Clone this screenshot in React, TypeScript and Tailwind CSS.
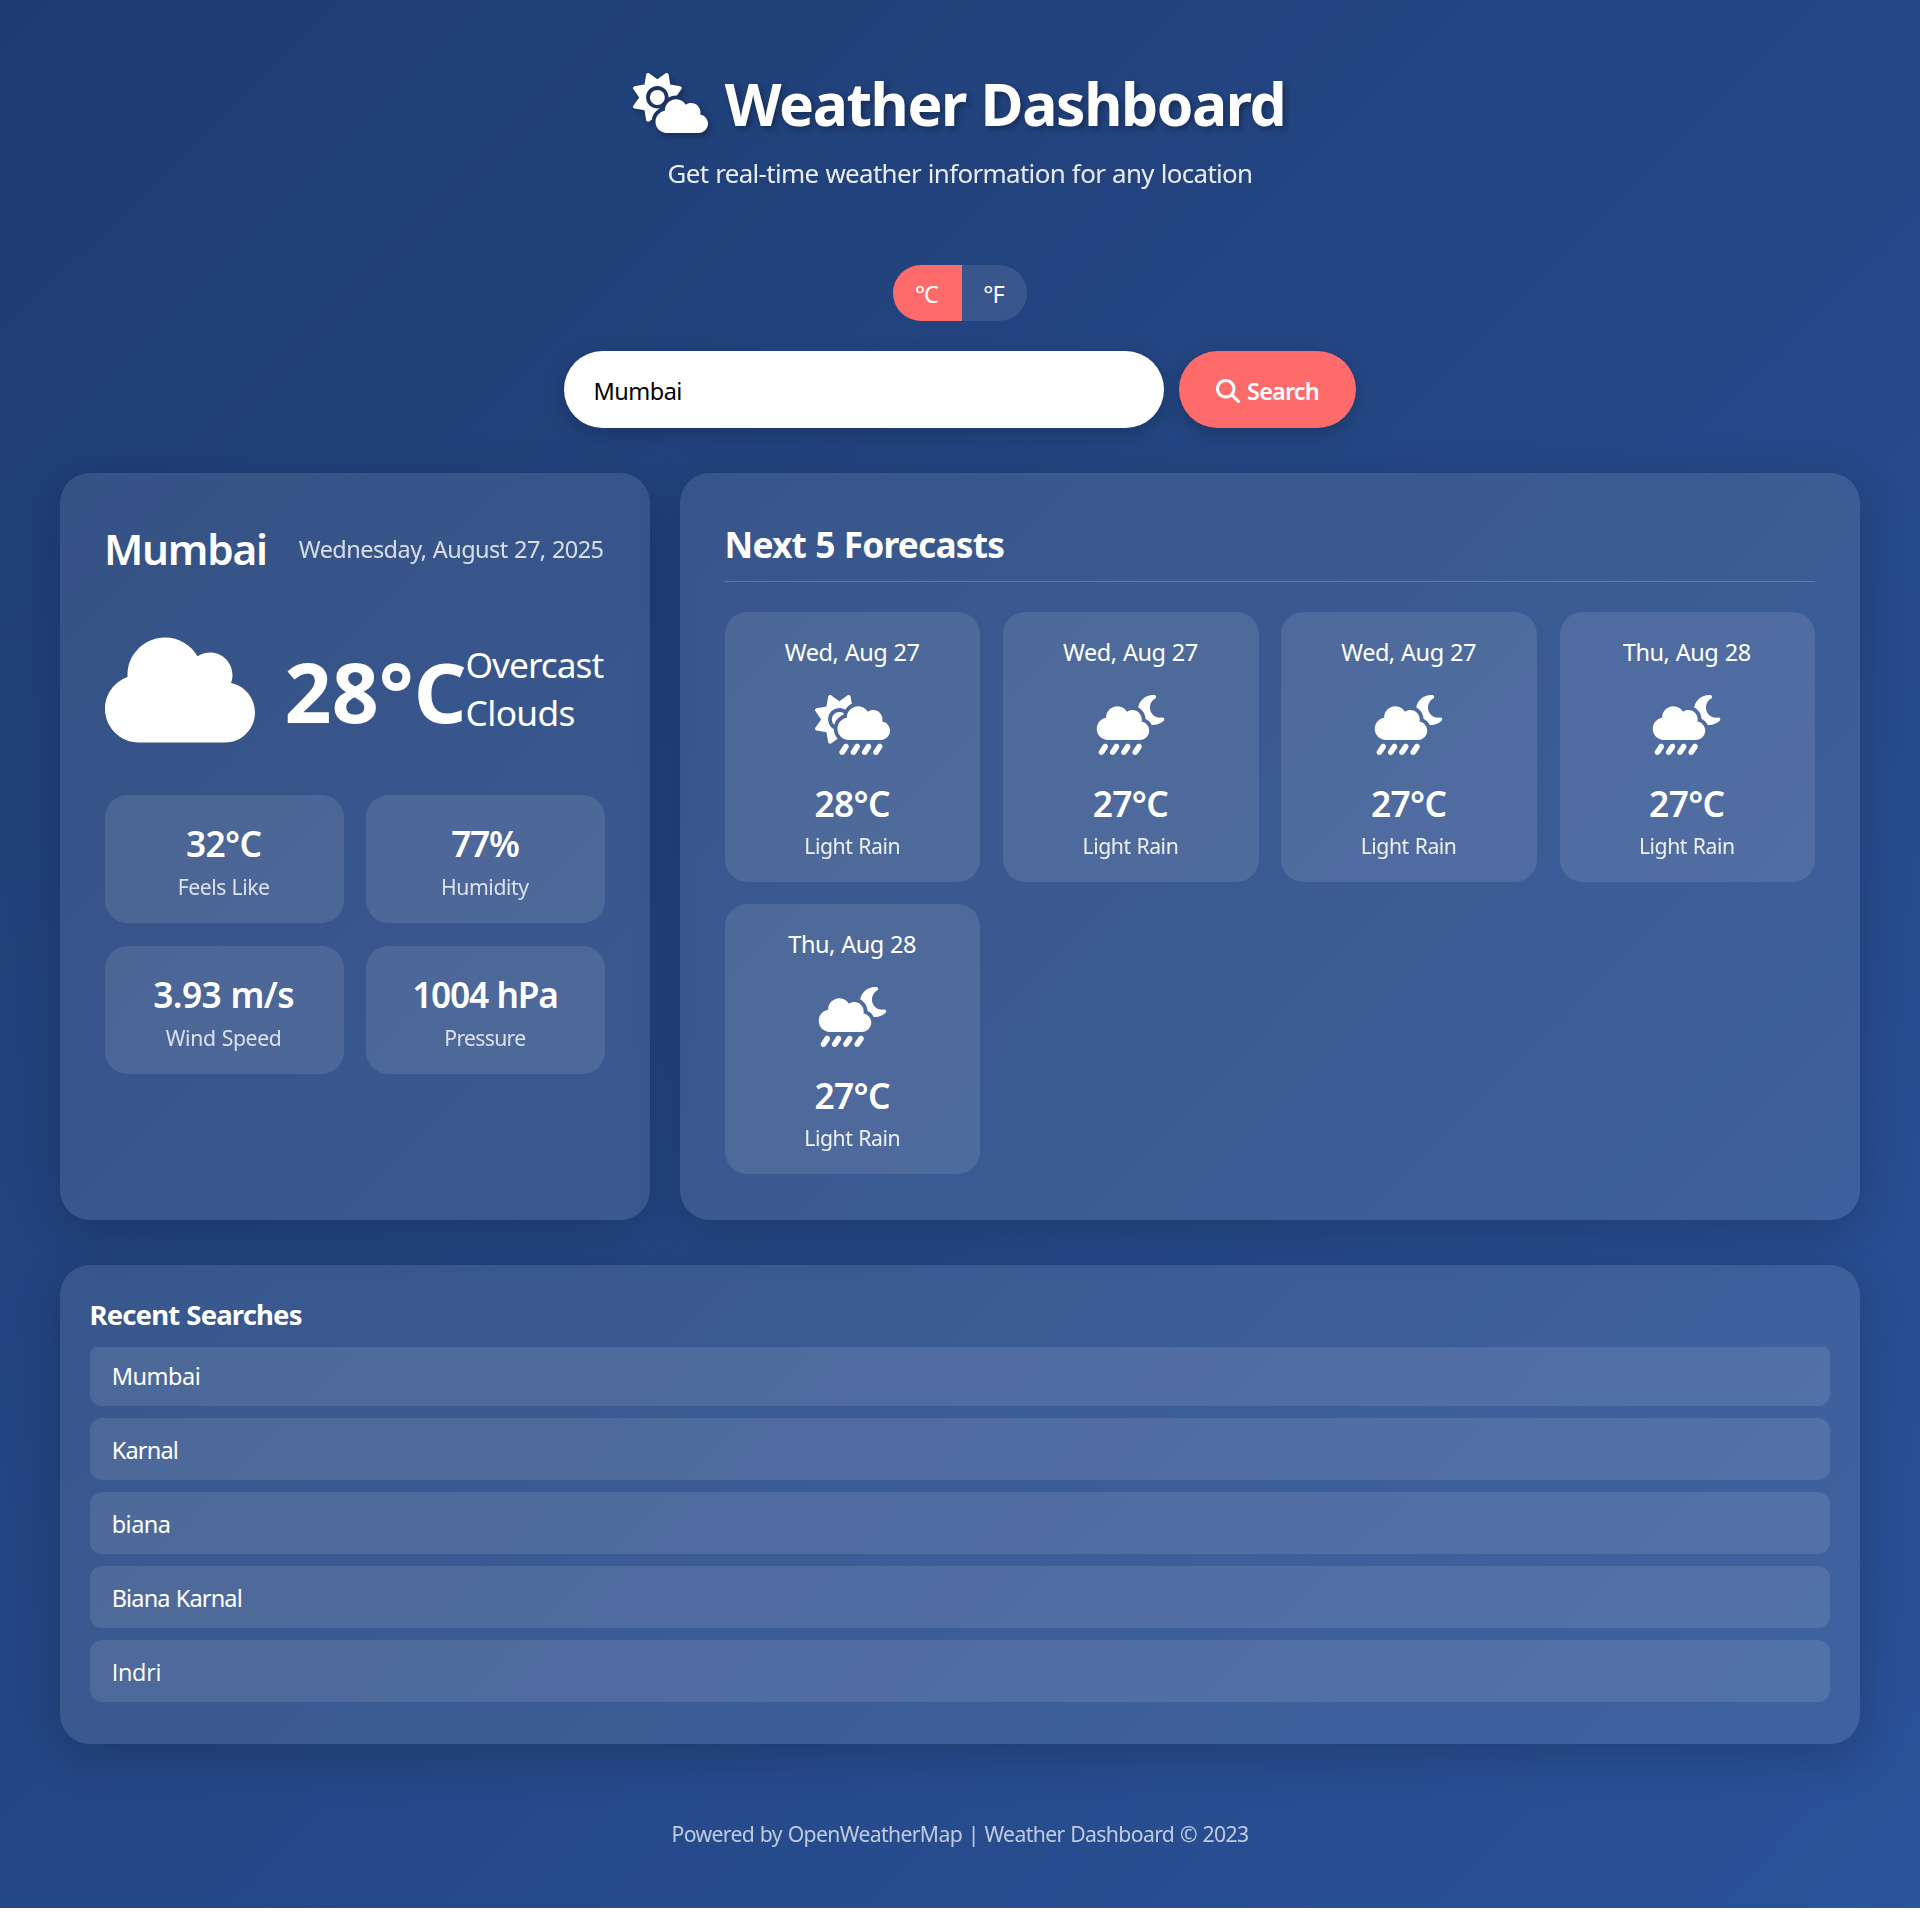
import React from "react";
import {
  FaCloud,
  FaCloudMoonRain,
  FaCloudSun,
  FaCloudSunRain,
  FaMagnifyingGlass,
} from "react-icons/fa6";

const details = [
  { value: "32°C", label: "Feels Like", valueClass: "tracking-[-0.019em]", labelClass: "tracking-[-0.024em]" },
  { value: "77%", label: "Humidity", valueClass: "tracking-[-0.036em]", labelClass: "tracking-[-0.019em]" },
  { value: "3.93 m/s", label: "Wind Speed", valueClass: "tracking-[-0.017em]", labelClass: "tracking-[-0.016em]" },
  { value: "1004 hPa", label: "Pressure", valueClass: "tracking-[-0.036em]", labelClass: "tracking-[-0.033em]" },
];

const forecasts = [
  { date: "Wed, Aug 27", temp: "28°C", night: false },
  { date: "Wed, Aug 27", temp: "27°C", night: true },
  { date: "Wed, Aug 27", temp: "27°C", night: true },
  { date: "Thu, Aug 28", temp: "27°C", night: true },
  { date: "Thu, Aug 28", temp: "27°C", night: true },
];

const recent = [
  { name: "Mumbai", className: "tracking-[-0.02em]" },
  { name: "Karnal", className: "tracking-[-0.034em]" },
  { name: "biana", className: "tracking-[-0.022em]" },
  { name: "Biana Karnal", className: "tracking-[-0.036em]" },
  { name: "Indri", className: "font-['Open_Sans',sans-serif] tracking-[-0.012em]" },
];

function Header() {
  return (
    <header className="flex flex-col items-center pt-[62px]">
      <h1 className="-ml-[2px] flex h-20 items-center gap-[17px] text-[58.8px] leading-[80px] font-bold tracking-[-0.0242em] whitespace-nowrap">
        <FaCloudSun className="mt-px h-[60px] w-[75px] drop-shadow-[3px_3px_3px_rgba(0,0,0,0.3)]" />
        <span className="mt-px [text-shadow:3px_3px_6px_rgba(0,0,0,0.3)]">Weather Dashboard</span>
      </h1>
      <p className="mt-[13px] text-[25.9px] leading-9 tracking-[-0.0252em] opacity-90">
        Get real-time weather information for any location
      </p>
    </header>
  );
}

function UnitToggle() {
  return (
    <div className="mx-auto mt-[74px] flex h-14 w-[134px] overflow-hidden rounded-full bg-white/10 text-[23.5px] leading-8 tracking-[-0.04em]">
      <button className="w-[69px] bg-[#ff6b6b] pt-px pr-[2px]">°C</button>
      <button className="w-[65px] pt-px pr-[2px]">°F</button>
    </div>
  );
}

function SearchBar() {
  return (
    <div className="mt-[30px] flex justify-center gap-[15px]">
      <input
        type="text"
        defaultValue="Mumbai"
        className="h-[77px] w-[600px] rounded-full bg-white pt-[3px] pl-[29.5px] text-[23.5px] tracking-[-0.022em] text-black shadow-[0_6px_20px_rgba(0,0,0,0.2)] outline-none"
      />
      <button className="flex h-[77px] w-[177px] items-center justify-center gap-[7px] rounded-full bg-[#ff6b6b] text-[23.5px] leading-8 font-semibold tracking-[-0.036em] shadow-[0_6px_20px_rgba(0,0,0,0.2)]">
        <FaMagnifyingGlass className="mt-[2px] h-6 w-6" />
        <span className="pt-[3px]">Search</span>
      </button>
    </div>
  );
}

function CurrentWeather() {
  return (
    <section className="rounded-[30px] bg-white/10 px-[45px] pt-[46px] shadow-[0_12px_48px_rgba(0,0,0,0.2)]">
      <div className="flex h-[58px] items-center justify-between whitespace-nowrap">
        <h2 className="-ml-px pt-[2px] text-[42.3px] leading-[58px] font-semibold tracking-[-0.029em]">Mumbai</h2>
        <span className="mr-[1.5px] pt-px text-[23.5px] leading-8 tracking-[-0.0235em] opacity-80">
          Wednesday, August 27, 2025
        </span>
      </div>
      <div className="mt-[53.2px] flex h-[120px] items-center">
        <FaCloud className="-ml-[0.5px] h-[120px] w-[150px] shrink-0" />
        <div className="mt-px ml-[30px] w-[181px] shrink-0 text-[82.3px] leading-[112px] font-bold tracking-[0.001em] whitespace-nowrap">
          28°C
        </div>
        <div className="mb-[5px] text-[35.3px] leading-[48px]">
          <div className="tracking-[-0.028em]">Overcast</div>
          <div className="tracking-[-0.018em]">Clouds</div>
        </div>
      </div>
      <div className="mt-[44.9px] grid grid-cols-2 gap-x-[22.5px] gap-y-[22.4px]">
        {details.map((d) => (
          <div key={d.label} className="h-[128.2px] rounded-[22.5px] bg-white/10 pt-[23.9px] pr-[1.5px] text-center">
            <div className={`text-[35.3px] leading-[48px] font-semibold ${d.valueClass}`}>{d.value}</div>
            <div className={`mt-[5.4px] text-[21.2px] leading-[29px] opacity-80 ${d.labelClass}`}>{d.label}</div>
          </div>
        ))}
      </div>
    </section>
  );
}

function Forecasts() {
  return (
    <section className="rounded-[30px] bg-white/10 px-[45px] pt-[47px] shadow-[0_12px_48px_rgba(0,0,0,0.2)]">
      <h2 className="border-b border-white/20 pb-[13px] text-[35.3px] leading-[48px] font-bold tracking-[-0.023em]">
        <span className="-ml-[0.5px]">Next 5 Forecasts</span>
      </h2>
      <div className="mt-[30px] grid grid-cols-4 gap-x-[22.8px] gap-y-[22px]">
        {forecasts.map((f, i) => (
          <div key={i} className="flex h-[270px] flex-col items-center rounded-[22.5px] bg-white/10 pt-[24px] pr-px">
            <div className="text-[23.5px] leading-8 tracking-[-0.021em]">{f.date}</div>
            {f.night ? (
              <FaCloudMoonRain className="mt-[27px] h-[60px] w-[75px]" />
            ) : (
              <FaCloudSunRain className="mt-[27px] h-[60px] w-[75px]" />
            )}
            <div className="mt-[24px] text-[35.3px] leading-[48px] font-semibold tracking-[-0.018em]">{f.temp}</div>
            <div className="mt-[4.4px] text-[21.2px] leading-[29px] tracking-[-0.021em] opacity-90">Light Rain</div>
          </div>
        ))}
      </div>
    </section>
  );
}

function RecentSearches() {
  return (
    <section className="mt-[45px] h-[479px] rounded-[30px] bg-white/10 px-[30px] pt-[31px] shadow-[0_12px_48px_rgba(0,0,0,0.2)]">
      <h3 className="-ml-[0.5px] text-[27.5px] leading-[38px] font-bold tracking-[-0.031em]">Recent Searches</h3>
      <div className="mt-[13.4px] overflow-hidden">
        <ul className="-mt-[2.5px] flex flex-col gap-3">
          {recent.map((r) => (
            <li key={r.name} className="h-[62px] rounded-xl bg-white/10 pt-[16px] pl-[21.7px] text-[23.5px] leading-8">
              <span className={r.className}>{r.name}</span>
            </li>
          ))}
        </ul>
      </div>
    </section>
  );
}

export default function App() {
  return (
    <div className="h-[1908px] w-full bg-[linear-gradient(135deg,#1e3c72,#2a5298)] font-['Noto_Sans',sans-serif] text-white [word-spacing:0.05em]">
      <div className="mx-auto w-[1800px]">
        <Header />
        <UnitToggle />
        <SearchBar />
        <main className="mt-[45px] grid h-[746.6px] grid-cols-[590px_1180px] gap-[30px]">
          <CurrentWeather />
          <Forecasts />
        </main>
        <RecentSearches />
        <footer className="mt-[75.5px] text-center text-[21.2px] leading-[30px] tracking-[-0.03em] opacity-70">
          Powered by OpenWeatherMap | Weather Dashboard © 2023
        </footer>
      </div>
    </div>
  );
}
